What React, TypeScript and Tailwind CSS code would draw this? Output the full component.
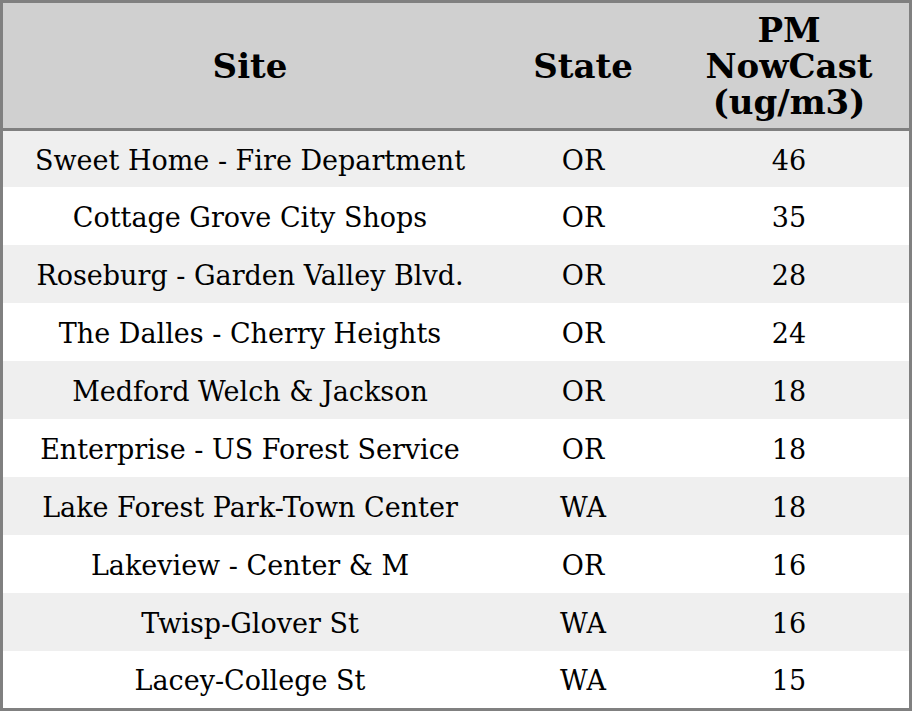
const rows: [string, string, number][] = [
  ["Sweet Home - Fire Department", "OR", 46],
  ["Cottage Grove City Shops", "OR", 35],
  ["Roseburg - Garden Valley Blvd.", "OR", 28],
  ["The Dalles - Cherry Heights", "OR", 24],
  ["Medford Welch & Jackson", "OR", 18],
  ["Enterprise - US Forest Service", "OR", 18],
  ["Lake Forest Park-Town Center", "WA", 18],
  ["Lakeview - Center & M", "OR", 16],
  ["Twisp-Glover St", "WA", 16],
  ["Lacey-College St", "WA", 15],
];

export default function App() {
  return (
    <div
      className="h-[711px] w-[912px] border-[3px] border-[#808080] bg-white text-black"
      style={{ fontFamily: '"DejaVu Serif", serif' }}
    >
      {/* header */}
      <div className="grid h-[128px] grid-cols-[494px_172px_240px] border-b-[3px] border-[#808080] bg-[#d0d0d0] text-[34px] font-bold leading-[36px]">
        <div className="flex items-center justify-center">Site</div>
        <div className="flex items-center justify-center">State</div>
        <div className="flex flex-col items-center justify-center text-center">
          <span>PM</span>
          <span>NowCast</span>
          <span>(ug/m3)</span>
        </div>
      </div>

      {rows.map(([site, state, pm], i) => (
        <div
          key={site}
          className={`grid grid-cols-[494px_172px_240px] items-center pt-[3px] text-[27px] leading-[32px] ${
            i % 2 === 0 ? "bg-[#efefef]" : "bg-white"
          } ${i === 0 ? "h-[56px]" : i === rows.length - 1 ? "h-[57px]" : "h-[58px]"}`}
        >
          <div className="text-center">{site}</div>
          <div className="text-center">{state}</div>
          <div className="text-center">{pm}</div>
        </div>
      ))}
    </div>
  );
}
